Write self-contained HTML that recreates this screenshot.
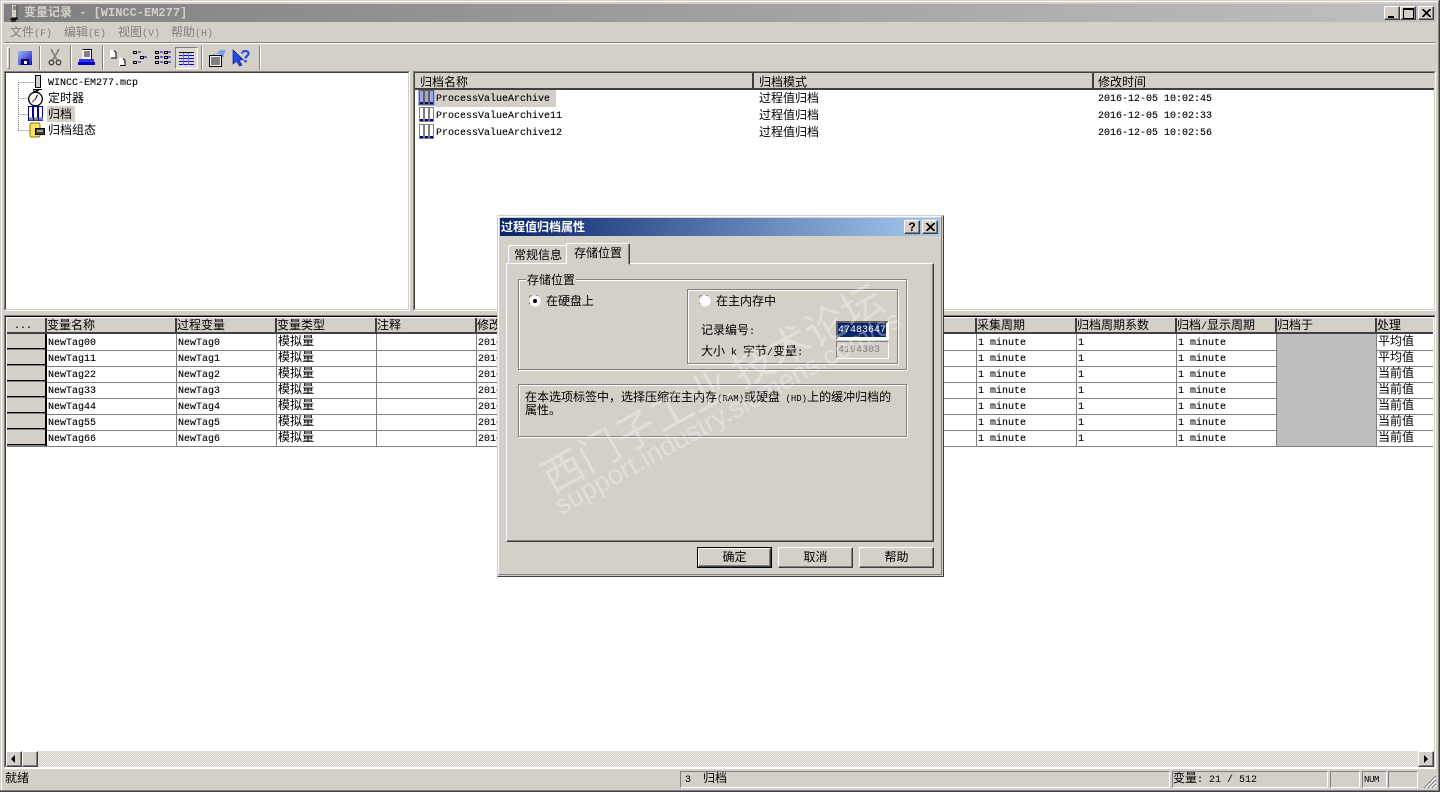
<!DOCTYPE html>
<html lang="zh"><head><meta charset="utf-8"><title>变量记录</title>
<style>
html,body{margin:0;padding:0;width:1440px;height:792px;overflow:hidden;background:#d4d0c8}
body{position:relative;font:12px/16px "Liberation Mono","WenQuanYi Zen Hei","Noto Sans CJK SC",monospace;color:#000}
div,span,svg{position:absolute}
.t{white-space:pre;height:16px;margin-top:1px}
.t.m{margin-top:2px}
.sunk{background:#fff;border:1px solid;border-color:#808080 #fff #fff #808080;box-sizing:border-box}
.sunk>.in{left:0;top:0;right:0;bottom:0;border:1px solid;border-color:#404040 #d4d0c8 #d4d0c8 #404040}
.h{background:#d4d0c8;height:16px;box-sizing:border-box;border-right:2px solid #404040;border-bottom:2px solid #404040}
.rw{left:7px;width:1426px;height:16px;box-sizing:border-box;border-bottom:1px solid #808080;background:#fff}
.vl{width:1px;background:#808080}
.et{box-sizing:border-box;border:1px solid #808080;box-shadow:1px 1px 0 #fff,inset 1px 1px 0 #fff}
.btn{box-sizing:border-box;background:#d4d0c8;border:1px solid;border-color:#fff #404040 #404040 #fff;box-shadow:inset -1px -1px 0 #808080;text-align:center;line-height:21px}
.sb{top:771px;height:17px;box-sizing:border-box;border:1px solid;border-color:#808080 #fff #fff #808080}
.m{font-size:10px;-webkit-text-stroke:.1px #000}
.g .m,.m.g{-webkit-text-stroke:0}
.i{position:static;font-size:10px}
.sep{width:2px;height:24px;top:46px;border-left:1px solid #808080;border-right:1px solid #fff;box-sizing:border-box}
.g{color:#808080}
.w{-webkit-text-stroke:0;color:#fff}
</style></head><body>

<!-- window chrome -->
<div style="left:1px;top:1px;width:1438px;height:1px;background:#fff"></div>
<div style="left:1px;top:1px;width:1px;height:790px;background:#fff"></div>
<div style="left:1438px;top:1px;width:1px;height:790px;background:#808080"></div>
<div style="left:0;top:790px;width:1440px;height:1px;background:#808080"></div>
<div style="left:0;top:791px;width:1440px;height:1px;background:#404040"></div>
<div style="left:1439px;top:0;width:1px;height:792px;background:#404040"></div>

<!-- title bar -->
<div style="left:4px;top:4px;width:1432px;height:18px;background:linear-gradient(90deg,#808080,#c0c0c0)"></div>
<svg style="left:9px;top:5px" width="11" height="17" viewBox="0 0 11 17"><rect x="3" y="0" width="6" height="13" fill="#d4d0c8"/><path d="M8 0v13H3M1 14h8M3 15h3v2H3z" stroke="#000" fill="none"/><path d="M4 2h3M4 4h3" stroke="#404040"/></svg>
<div class="t" style="left:24px;top:4px;color:#d4d0c8;font-size:12px;font-weight:bold">变量记录 - [WINCC-EM277]</div>
<div class="btn" style="left:1384px;top:6px;width:16px;height:14px"><div style="left:3px;top:9px;width:6px;height:2px;background:#000"></div></div>
<div class="btn" style="left:1400px;top:6px;width:16px;height:14px"><div style="left:2px;top:1px;width:9px;height:8px;border:1px solid #000;border-top-width:2px;box-sizing:content-box"></div></div>
<div class="btn" style="left:1418px;top:6px;width:16px;height:14px"><svg style="left:3px;top:2px" width="9" height="8"><path d="M0 0l8 8M1 0l8 8M8 0L0 8M9 0L1 8" stroke="#000"/></svg></div>

<!-- menu -->
<div class="t g" style="left:10px;top:24px">文件<span class="i">(F)</span></div>
<div class="t g" style="left:64px;top:24px">编辑<span class="i">(E)</span></div>
<div class="t g" style="left:118px;top:24px">视图<span class="i">(V)</span></div>
<div class="t g" style="left:171px;top:24px">帮助<span class="i">(H)</span></div>
<div style="left:4px;top:42px;width:1432px;height:1px;background:#808080"></div>
<div style="left:4px;top:43px;width:1432px;height:1px;background:#fff"></div>

<!-- toolbar -->
<div style="left:7px;top:47px;width:3px;height:22px;box-sizing:border-box;border:1px solid;border-color:#fff #808080 #808080 #fff"></div>
<svg style="left:17px;top:50px" width="16" height="16"><defs><linearGradient id="b" x1="0" y1="0" x2="1" y2="1"><stop offset="0" stop-color="#a8b8ee"/><stop offset="1" stop-color="#1010c8"/></linearGradient></defs><rect x="1" y="1" width="14" height="14" fill="url(#b)"/><rect x="4" y="9" width="8" height="6" fill="#000080"/><rect x="7" y="11" width="3" height="3" fill="#fff"/></svg>
<div class="sep" style="left:39px"></div>
<svg style="left:48px;top:49px" width="14" height="18"><path d="M3 0l6 11M11 0L5 11" stroke="#808080" stroke-width="1.6" fill="none"/><circle cx="3.5" cy="13.5" r="2.3" fill="none" stroke="#404040" stroke-width="1.3"/><circle cx="10.5" cy="13.5" r="2.3" fill="none" stroke="#404040" stroke-width="1.3"/></svg>
<div class="sep" style="left:70px"></div>
<svg style="left:78px;top:49px" width="17" height="17"><rect x="4.5" y="0.5" width="9" height="10" fill="#fff"/><path d="M4.5 .5h9v10" fill="none" stroke="#000"/><path d="M6 3h6M6 5h6M6 7h6" stroke="#000"/><rect x="1" y="10" width="15" height="3" fill="#3030ff"/><rect x="0" y="13" width="17" height="3" fill="#0000c0"/></svg>
<div class="sep" style="left:102px"></div>
<svg style="left:110px;top:50px" width="16" height="16"><path d="M0 0h4l2 2v6H0zM9 8h4l2 2v6H9z" fill="#fff"/><path d="M4 0.5l2 2v5.500H1M13 8.500l2 2v5H10" fill="none" stroke="#000"/></svg>
<svg style="left:133px;top:50px" width="15" height="16"><g fill="#d8d8d8" stroke="#000"><rect x=".5" y="1.5" width="3" height="2"/><rect x=".5" y="11.5" width="3" height="2"/><rect x="7.5" y="6.5" width="3" height="2"/></g><path d="M5 2h3M5 12h3M11 7h3" stroke="#0000c0"/></svg>
<svg style="left:155px;top:50px" width="16" height="16"><g fill="#d8d8d8" stroke="#000"><rect x=".5" y="1.5" width="3" height="2"/><rect x=".5" y="6.5" width="3" height="2"/><rect x=".5" y="11.5" width="3" height="2"/><rect x="9.5" y="1.5" width="3" height="2"/><rect x="9.5" y="6.5" width="3" height="2"/><rect x="9.5" y="11.5" width="3" height="2"/></g><path d="M5 2h3M5 7h3M5 12h3M13 2h3M13 7h3M13 12h3" stroke="#0000c0"/></svg>
<div style="left:175px;top:47px;width:23px;height:22px;box-sizing:border-box;border:1px solid;border-color:#808080 #fff #fff #808080;background:repeating-conic-gradient(#e8e6e0 0 25%,#d4d0c8 0 50%) 0 0/2px 2px"></div>
<svg style="left:179px;top:52px" width="15" height="13"><path d="M0 .5h15" stroke="#000"/><path d="M0 3.5h15M0 6.5h15M0 9.5h15M0 12.5h15" stroke="#0000e0"/><path d="M4.5 1v12M9.5 1v12" stroke="#7070ff"/></svg>
<div class="sep" style="left:201px"></div>
<svg style="left:208px;top:49px" width="18" height="18"><path d="M8 5L12 1h6l-2 4v3h-4V5z" fill="#7aa0ee"/><path d="M2 8l5-4v2H2z" fill="#7aa0ee"/><path d="M1.500 6.500h12v11h-12z" fill="#fff" stroke="#000"/><path d="M3 9h9M3 11h9M3 13h9M3 15h9" stroke="#000"/></svg>
<svg style="left:232px;top:49px" width="18" height="18"><path d="M1 1v14l3.500-3 3 5 2.500-1-3-5h4.500z" fill="#2050e0" stroke="#0000a0" stroke-width=".6"/><path d="M10 4.500C10 1.500 16.500 1 16.500 4.500c0 2.500-3 2.500-3 5" fill="none" stroke="#2050e0" stroke-width="2.2"/><rect x="12.3" y="11" width="2.4" height="2.4" fill="#2050e0"/></svg>
<div class="sep" style="left:259px"></div>

<!-- left pane -->
<div class="sunk" style="left:4px;top:71px;width:406px;height:240px"><div class="in" style="box-sizing:border-box"></div></div>
<svg style="left:15px;top:80px" width="20" height="52"><path d="M3.500 2v49M3.500 2.500h16M3.500 18.500h10M3.500 34.500h10M3.500 50.500h14" stroke="#808080" stroke-dasharray="1 1" fill="none"/></svg>
<svg style="left:33px;top:75px" width="11" height="16"><rect x="2.500" y=".5" width="5" height="12" fill="#d4d0c8" stroke="#000"/><path d="M0 14.500h9" stroke="#000"/><path d="M3 15h3v1H3z"/></svg>
<div class="t m" style="left:48px;top:74px">WINCC-EM277.mcp</div>
<svg style="left:27px;top:90px" width="17" height="17"><circle cx="8.500" cy="9" r="6.800" fill="#fff" stroke="#000" stroke-width="1.300"/><path d="M8.500 9L5 12" stroke="#e00000"/><path d="M8.500 9l2-4M6 1h5" stroke="#000"/></svg>
<div class="t" style="left:48px;top:90px">定时器</div>
<svg style="left:28px;top:106px" width="16" height="16"><rect x=".5" y=".5" width="4" height="14" fill="#fff" stroke="#0000a0"/><rect x="5.500" y=".5" width="4" height="14" fill="#fff" stroke="#0000a0"/><rect x="10.500" y=".5" width="4" height="14" fill="#fff" stroke="#0000a0"/><path d="M1 13h4M6 13h4M11 13h4" stroke="#808080" stroke-width="3"/></svg>
<div style="left:47px;top:106px;width:28px;height:16px;background:#d4d0c8"></div>
<div class="t" style="left:48px;top:106px">归档</div>
<svg style="left:29px;top:122px" width="16" height="16"><path d="M1 3q0-2 2-2h6q2 0 2 2v10q0 2-2 2H3q-2 0-2-2z" fill="#ffe060" stroke="#808000"/><rect x="6.500" y="6.500" width="9" height="6" fill="#404040" stroke="#000"/><path d="M8 9h6" stroke="#fff"/></svg>
<div class="t" style="left:48px;top:122px">归档组态</div>

<!-- right list -->
<div class="sunk" style="left:413px;top:71px;width:1023px;height:240px"><div class="in" style="box-sizing:border-box"></div></div>
<div class="h" style="left:415px;top:73px;width:339px;height:17px"></div>
<div class="h" style="left:754px;top:73px;width:340px;height:17px"></div>
<div class="h" style="left:1094px;top:73px;width:340px;height:17px;border-right:none"></div>
<div class="t" style="left:420px;top:74px">归档名称</div>
<div class="t" style="left:759px;top:74px">归档模式</div>
<div class="t" style="left:1098px;top:74px">修改时间</div>

<div style="left:418px;top:90px;width:17px;height:16px;background:#a8b4d8"></div>
<div style="left:435px;top:90px;width:121px;height:17px;background:#d4d0c8"></div>
<svg style="left:419px;top:90px" width="16" height="16"><rect x=".5" y=".5" width="4" height="14" fill="#a0a8d8" stroke="#606060"/><rect x="5.500" y=".5" width="4" height="14" fill="#a0a8d8" stroke="#606060"/><rect x="10.500" y=".5" width="4" height="14" fill="#a0a8d8" stroke="#606060"/><path d="M1 13h3M6 13h3M11 13h3" stroke="#000080" stroke-width="2"/></svg>
<svg style="left:419px;top:107px" width="16" height="16"><rect x=".5" y=".5" width="4" height="14" fill="#fff" stroke="#808080"/><rect x="5.500" y=".5" width="4" height="14" fill="#fff" stroke="#808080"/><rect x="10.500" y=".5" width="4" height="14" fill="#fff" stroke="#808080"/><path d="M1 13h3M6 13h3M11 13h3" stroke="#000080" stroke-width="2"/></svg>
<svg style="left:419px;top:124px" width="16" height="16"><rect x=".5" y=".5" width="4" height="14" fill="#fff" stroke="#808080"/><rect x="5.500" y=".5" width="4" height="14" fill="#fff" stroke="#808080"/><rect x="10.500" y=".5" width="4" height="14" fill="#fff" stroke="#808080"/><path d="M1 13h3M6 13h3M11 13h3" stroke="#000080" stroke-width="2"/></svg>
<div class="t m" style="left:436px;top:90px">ProcessValueArchive</div>
<div class="t m" style="left:436px;top:107px">ProcessValueArchive11</div>
<div class="t m" style="left:436px;top:124px">ProcessValueArchive12</div>
<div class="t" style="left:759px;top:90px">过程值归档</div>
<div class="t" style="left:759px;top:107px">过程值归档</div>
<div class="t" style="left:759px;top:124px">过程值归档</div>
<div class="t m" style="left:1098px;top:90px">2016-12-05 10:02:45</div>
<div class="t m" style="left:1098px;top:107px">2016-12-05 10:02:33</div>
<div class="t m" style="left:1098px;top:124px">2016-12-05 10:02:56</div>

<!-- grid -->
<div class="sunk" style="left:4px;top:315px;width:1432px;height:453px"><div class="in" style="box-sizing:border-box;border-top-color:#000"></div></div>
<div class="h" style="left:7px;top:318px;width:40px"></div>
<div class="t m" style="left:14px;top:317px">...</div>
<div class="h" style="left:47px;top:318px;width:130px"></div>
<div class="h" style="left:177px;top:318px;width:100px"></div>
<div class="h" style="left:277px;top:318px;width:100px"></div>
<div class="h" style="left:377px;top:318px;width:100px"></div>
<div class="h" style="left:477px;top:318px;width:500px"></div>
<div class="h" style="left:977px;top:318px;width:100px"></div>
<div class="h" style="left:1077px;top:318px;width:100px"></div>
<div class="h" style="left:1177px;top:318px;width:100px"></div>
<div class="h" style="left:1277px;top:318px;width:100px"></div>
<div class="h" style="left:1377px;top:318px;width:56px;border-right:none"></div>
<div class="t" style="left:47px;top:317px">变量名称</div>
<div class="t" style="left:177px;top:317px">过程变量</div>
<div class="t" style="left:277px;top:317px">变量类型</div>
<div class="t" style="left:377px;top:317px">注释</div>
<div class="t" style="left:477px;top:317px">修改</div>
<div class="t" style="left:977px;top:317px">采集周期</div>
<div class="t" style="left:1077px;top:317px">归档周期系数</div>
<div class="t" style="left:1177px;top:317px">归档<span class="i">/</span>显示周期</div>
<div class="t" style="left:1277px;top:317px">归档于</div>
<div class="t" style="left:1377px;top:317px">处理</div>

<div class="rw" style="top:335px"></div>
<div class="rw" style="top:351px"></div>
<div class="rw" style="top:367px"></div>
<div class="rw" style="top:383px"></div>
<div class="rw" style="top:399px"></div>
<div class="rw" style="top:415px"></div>
<div class="rw" style="top:431px"></div>
<div style="left:7px;top:334px;width:39px;height:112px;background:repeating-linear-gradient(180deg,#d4d0c8 0 14px,#000 14px 15px,#808080 15px 16px)"></div>
<div style="left:45px;top:334px;width:2px;height:112px;background:#000"></div>
<div style="left:1277px;top:334px;width:99px;height:112px;background:#bebebe"></div>
<div class="vl" style="left:176px;top:334px;height:112px"></div>
<div class="vl" style="left:276px;top:334px;height:112px"></div>
<div class="vl" style="left:376px;top:334px;height:112px"></div>
<div class="vl" style="left:476px;top:334px;height:112px"></div>
<div class="vl" style="left:976px;top:334px;height:112px"></div>
<div class="vl" style="left:1076px;top:334px;height:112px"></div>
<div class="vl" style="left:1176px;top:334px;height:112px"></div>
<div class="vl" style="left:1276px;top:334px;height:112px"></div>
<div class="vl" style="left:1376px;top:334px;height:112px"></div>

<div class="t m" style="left:48px;top:334px">NewTag00</div><div class="t m" style="left:178px;top:334px">NewTag0</div><div class="t" style="left:278px;top:333px">模拟量</div><div class="t m" style="left:478px;top:334px">2016</div><div class="t m" style="left:978px;top:334px">1 minute</div><div class="t m" style="left:1078px;top:334px">1</div><div class="t m" style="left:1178px;top:334px">1 minute</div><div class="t" style="left:1378px;top:333px">平均值</div>
<div class="t m" style="left:48px;top:350px">NewTag11</div><div class="t m" style="left:178px;top:350px">NewTag1</div><div class="t" style="left:278px;top:349px">模拟量</div><div class="t m" style="left:478px;top:350px">2016</div><div class="t m" style="left:978px;top:350px">1 minute</div><div class="t m" style="left:1078px;top:350px">1</div><div class="t m" style="left:1178px;top:350px">1 minute</div><div class="t" style="left:1378px;top:349px">平均值</div>
<div class="t m" style="left:48px;top:366px">NewTag22</div><div class="t m" style="left:178px;top:366px">NewTag2</div><div class="t" style="left:278px;top:365px">模拟量</div><div class="t m" style="left:478px;top:366px">2016</div><div class="t m" style="left:978px;top:366px">1 minute</div><div class="t m" style="left:1078px;top:366px">1</div><div class="t m" style="left:1178px;top:366px">1 minute</div><div class="t" style="left:1378px;top:365px">当前值</div>
<div class="t m" style="left:48px;top:382px">NewTag33</div><div class="t m" style="left:178px;top:382px">NewTag3</div><div class="t" style="left:278px;top:381px">模拟量</div><div class="t m" style="left:478px;top:382px">2016</div><div class="t m" style="left:978px;top:382px">1 minute</div><div class="t m" style="left:1078px;top:382px">1</div><div class="t m" style="left:1178px;top:382px">1 minute</div><div class="t" style="left:1378px;top:381px">当前值</div>
<div class="t m" style="left:48px;top:398px">NewTag44</div><div class="t m" style="left:178px;top:398px">NewTag4</div><div class="t" style="left:278px;top:397px">模拟量</div><div class="t m" style="left:478px;top:398px">2016</div><div class="t m" style="left:978px;top:398px">1 minute</div><div class="t m" style="left:1078px;top:398px">1</div><div class="t m" style="left:1178px;top:398px">1 minute</div><div class="t" style="left:1378px;top:397px">当前值</div>
<div class="t m" style="left:48px;top:414px">NewTag55</div><div class="t m" style="left:178px;top:414px">NewTag5</div><div class="t" style="left:278px;top:413px">模拟量</div><div class="t m" style="left:478px;top:414px">2016</div><div class="t m" style="left:978px;top:414px">1 minute</div><div class="t m" style="left:1078px;top:414px">1</div><div class="t m" style="left:1178px;top:414px">1 minute</div><div class="t" style="left:1378px;top:413px">当前值</div>
<div class="t m" style="left:48px;top:430px">NewTag66</div><div class="t m" style="left:178px;top:430px">NewTag6</div><div class="t" style="left:278px;top:429px">模拟量</div><div class="t m" style="left:478px;top:430px">2016</div><div class="t m" style="left:978px;top:430px">1 minute</div><div class="t m" style="left:1078px;top:430px">1</div><div class="t m" style="left:1178px;top:430px">1 minute</div><div class="t" style="left:1378px;top:429px">当前值</div>

<!-- scrollbar -->
<div style="left:6px;top:751px;width:1428px;height:16px;background:repeating-conic-gradient(#eeece8 0 25%,#d4d0c8 0 50%) 0 0/2px 2px"></div>
<div class="btn" style="left:6px;top:751px;width:16px;height:16px"><svg style="left:4px;top:3px" width="5" height="8"><path d="M4 0v8L0 4z"/></svg></div>
<div class="btn" style="left:22px;top:751px;width:16px;height:16px"></div>
<div class="btn" style="left:1418px;top:751px;width:16px;height:16px"><svg style="left:5px;top:3px" width="5" height="8"><path d="M0 0v8l4-4z"/></svg></div>

<!-- status bar -->
<div style="left:4px;top:768px;width:1432px;height:1px;background:#fff"></div>
<div class="t" style="left:5px;top:770px">就绪</div>
<div class="sb" style="left:680px;width:490px"></div>
<div class="t" style="left:685px;top:770px"><span class="i">3  </span>归档</div>
<div class="sb" style="left:1172px;width:156px"></div>
<div class="t" style="left:1173px;top:770px">变量<span class="i">: 21 / 512</span></div>
<div class="sb" style="left:1330px;width:30px"></div>
<div class="sb" style="left:1362px;width:25px"></div>
<div class="t" style="left:1364px;top:771px;font-size:9px;letter-spacing:-.4px">NUM</div>
<div class="sb" style="left:1388px;width:30px"></div>
<svg style="left:1423px;top:775px" width="13" height="14"><path d="M13 1L1 13M13 5L5 13M13 9l-4 4" stroke="#808080" stroke-width="1.2"/><path d="M13 2.500L2.500 13M13 6.500L6.500 13M13 10.500L10.500 13" stroke="#fff"/></svg>

<!-- dialog -->
<div style="left:497px;top:215px;width:447px;height:362px;background:#d4d0c8;box-sizing:border-box;border:1px solid;border-color:#d4d0c8 #404040 #404040 #d4d0c8"></div>
<div style="left:498px;top:216px;width:444px;height:359px;box-sizing:border-box;border:1px solid;border-color:#fff #808080 #808080 #fff"></div>
<div style="left:500px;top:218px;width:440px;height:18px;background:linear-gradient(90deg,#0a246a,#a6caf0)"></div>
<div class="t" style="left:501px;top:219px;color:#fff;font-weight:bold">过程值归档属性</div>
<div class="btn" style="left:904px;top:220px;width:16px;height:14px;font:bold 12px/12px 'Liberation Sans',sans-serif">?</div>
<div class="btn" style="left:922px;top:220px;width:16px;height:14px"><svg style="left:3px;top:2px" width="9" height="8"><path d="M0 0l8 8M1 0l8 8M8 0L0 8M9 0L1 8" stroke="#000"/></svg></div>

<!-- tab page -->
<div style="left:506px;top:263px;width:428px;height:279px;box-sizing:border-box;border:1px solid;border-color:#fff #404040 #404040 #fff;box-shadow:inset -1px -1px 0 #808080"></div>
<div style="left:508px;top:245px;width:58px;height:19px;box-sizing:border-box;border-top:1px solid #fff;border-left:1px solid #fff;border-radius:2px 0 0 0;background:#d4d0c8;border-bottom:1px solid #fff"></div>
<div style="left:566px;top:243px;width:64px;height:22px;box-sizing:border-box;border:1px solid;border-color:#fff #404040 #d4d0c8 #fff;border-radius:2px 2px 0 0;background:#d4d0c8;box-shadow:inset -1px 0 0 #808080"></div>
<div class="t" style="left:514px;top:247px">常规信息</div>
<div class="t" style="left:574px;top:245px">存储位置</div>

<div class="et" style="left:518px;top:279px;width:389px;height:91px"></div>
<div class="t" style="left:526px;top:272px;background:#d4d0c8;padding:0 1px">存储位置</div>
<svg style="left:529px;top:295px" width="12" height="12"><circle cx="6" cy="6" r="5.500" fill="#fff"/><path d="M1 9A5.500 5.500 0 0 1 9 1" stroke="#808080" fill="none"/><circle cx="6" cy="6" r="2" fill="#000"/></svg>
<div class="t" style="left:546px;top:293px">在硬盘上</div>
<div class="et" style="left:687px;top:289px;width:211px;height:75px"></div>
<svg style="left:699px;top:295px" width="12" height="12"><circle cx="6" cy="6" r="5.500" fill="#fff"/><path d="M1 9A5.500 5.500 0 0 1 9 1" stroke="#808080" fill="none"/></svg>
<div class="t" style="left:716px;top:293px">在主内存中</div>
<div class="t" style="left:701px;top:322px">记录编号<span class="i">:</span></div>
<div class="t" style="left:701px;top:343px">大小<span class="i"> k </span>字节<span class="i">/</span>变量<span class="i">:</span></div>
<div style="left:836px;top:321px;width:53px;height:19px;box-sizing:border-box;border:2px solid;border-color:#606060 #fff #fff #606060;background:#fff"></div>
<div style="left:838px;top:323px;width:48px;height:14px;background:#0a246a"></div>
<div class="t m w" style="left:838px;top:321px;width:48px;overflow:hidden">47483647</div>
<div style="left:836px;top:341px;width:53px;height:18px;box-sizing:border-box;border:1px solid;border-color:#808080 #fff #fff #808080"></div>
<div class="t m g" style="left:838px;top:341px">4194303</div>

<div class="et" style="left:518px;top:384px;width:389px;height:53px"></div>
<div class="t" style="left:525px;top:391px;line-height:12px;height:26px;width:375px;white-space:normal">在本选项标签中，选择压缩在主内存<span style="position:static;font-size:9px">(RAM)</span>或硬盘<span style="position:static;font-size:9px"> (HD)</span>上的缓冲归档的<br>属性。</div>

<div style="left:697px;top:547px;width:75px;height:21px;border:1px solid #000;box-sizing:border-box"><div class="btn" style="left:0;top:0;right:0;bottom:0;line-height:19px">确定</div></div>
<div class="btn" style="left:778px;top:547px;width:75px;height:21px">取消</div>
<div class="btn" style="left:859px;top:547px;width:75px;height:21px">帮助</div>

<!-- watermark -->
<div class="t" style="left:555px;top:450px;height:48px;font:41px/48px 'WenQuanYi Zen Hei','Noto Sans CJK SC',sans-serif;color:rgba(255,255,255,.32);transform:rotate(-29deg);transform-origin:0 100%;letter-spacing:.5px">西门子工业 技术论坛</div>
<div class="t" style="left:565px;top:487px;height:34px;font:27px/34px 'Liberation Sans',sans-serif;color:rgba(255,255,255,.32);transform:rotate(-29deg);transform-origin:0 100%">support.industry.siemens.com/cs</div>

</body></html>
